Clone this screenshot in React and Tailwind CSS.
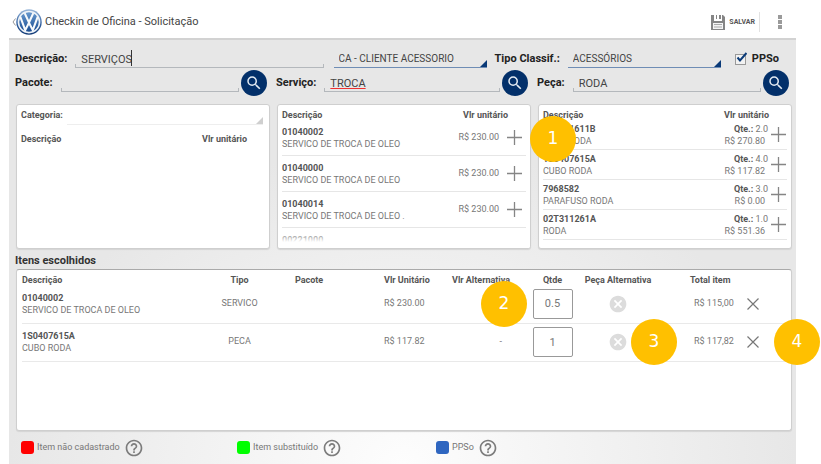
import { MdSearch, MdHelpOutline, MdCancel } from "react-icons/md";

const services = [
  { code: "01040002", name: "SERVICO DE TROCA DE OLEO", price: "R$ 230.00" },
  { code: "01040000", name: "SERVICO DE TROCA DE OLEO", price: "R$ 230.00" },
  { code: "01040014", name: "SERVICO DE TROCA DE OLEO .", price: "R$ 230.00" },
];

const parts = [
  { code: "1S0601611B", name: "AROS RODA", qty: "2.0", price: "R$ 270.80" },
  { code: "1S0407615A", name: "CUBO RODA", qty: "4.0", price: "R$ 117.82" },
  { code: "7968582", name: "PARAFUSO RODA", qty: "3.0", price: "R$ 0.00" },
  { code: "02T311261A", name: "RODA", qty: "1.0", price: "R$ 551.36" },
];

const chosen = [
  { code: "01040002", name: "SERVICO DE TROCA DE OLEO", type: "SERVICO", unit: "R$ 230.00", alt: "", qty: "0.5", total: "R$ 115,00" },
  { code: "1S0407615A", name: "CUBO RODA", type: "PECA", unit: "R$ 117.82", alt: "-", qty: "1", total: "R$ 117,82" },
];

function Logo() {
  return (
    <svg viewBox="0 0 48 48" className="size-[26px]" aria-hidden="true">
      <defs>
        <linearGradient id="rim" x1="0" y1="0" x2="0" y2="1">
          <stop offset="0" stopColor="#9dbadb" />
          <stop offset="0.5" stopColor="#3a68a6" />
          <stop offset="1" stopColor="#123a75" />
        </linearGradient>
        <linearGradient id="disc" x1="0" y1="0" x2="0" y2="1">
          <stop offset="0" stopColor="#6a9bd0" />
          <stop offset="1" stopColor="#164a8f" />
        </linearGradient>
      </defs>
      <circle cx="24" cy="24" r="23.5" fill="url(#rim)" />
      <circle cx="24" cy="24" r="19.5" fill="url(#disc)" stroke="#eef3f8" strokeWidth="3" />
      <g fill="none" stroke="#f7fafc" strokeWidth="3.8" strokeLinejoin="miter">
        <path d="M16 7.5 24 25 32 7.5" />
        <path d="M8 14.5 17 39 24 25.5 31 39 40 14.5" />
      </g>
    </svg>
  );
}

function SaveIcon() {
  return (
    <svg viewBox="0 0 14 15" className="h-[15px] w-[14px]" aria-hidden="true">
      <path d="M0 0h3v6h8V0h1l2 2v13H0z" fill="#858585" />
      <path d="M5 0h1v4H5zM8 0h2v4H8z" fill="#858585" />
      <path d="M2 8h10v6H2z" fill="#f4f4f4" />
      <path d="M3 9.500h8M3 12h8" stroke="#aaa" strokeWidth="1" />
    </svg>
  );
}

function Plus() {
  return (
    <button type="button" aria-label="Adicionar" className="size-[15px] shrink-0">
      <svg viewBox="0 0 15 15" className="size-[15px]" aria-hidden="true">
        <path d="M0 7.500h15M7.500 0v15" stroke="#858585" strokeWidth="1.300" />
      </svg>
    </button>
  );
}

function Field({ id, label, value, inputClass = "", children }) {
  return (
    <div className="flex min-w-0 flex-1 items-center">
      <label htmlFor={id} className="mr-2 shrink-0 font-bold">{label}</label>
      <div className="relative h-[18px] min-w-0 flex-1">
        <input
          id={id}
          defaultValue={value}
          spellCheck={false}
          className={`block h-[18px] w-full bg-transparent px-1.5 text-[#444] outline-none ${inputClass}`}
        />
        <span className="absolute inset-x-0 bottom-0 h-1 border-x border-b border-[#b4b8bc]" />
        {children}
      </div>
    </div>
  );
}

function SearchButton({ label }) {
  return (
    <button
      type="button"
      aria-label={label}
      className="flex size-[26px] shrink-0 items-center justify-center rounded-full bg-[#03306a] text-[#e4ebf3]"
    >
      <MdSearch className="size-[18px]" />
    </button>
  );
}

function Dropdown({ label, value }) {
  return (
    <div className="relative h-[18px] w-[153px] shrink-0 border-b border-[#6f8db5]">
      <select aria-label={label} className="block h-4 w-full appearance-none bg-transparent px-[5px] text-[10px] text-[#444] outline-none">
        <option>{value}</option>
      </select>
      <svg viewBox="0 0 7 7" className="absolute right-0 bottom-0 size-[7px]" aria-hidden="true">
        <path d="M7 0v7H0z" fill="#0a3a78" />
      </svg>
    </div>
  );
}

function Card({ children }) {
  return (
    <section className="relative h-[145px] min-w-0 overflow-hidden rounded-[3px] border border-[#cfcfcf] bg-white px-1 shadow-[0_1px_1px_#d4d4d4]">
      {children}
    </section>
  );
}

function ListHead() {
  return (
    <div className="flex justify-between pt-[5px] pr-[18px] leading-[10px] font-bold text-[#555]">
      <span>Descrição</span>
      <span>Vlr unitário</span>
    </div>
  );
}

function Legend({ color, text, className = "" }) {
  return (
    <div className={`flex items-center ${className}`}>
      <span className={`mr-[3px] size-[13px] rounded-[3px] ${color}`} />
      <span>{text}</span>
      <button type="button" aria-label={`Ajuda: ${text}`} className="ml-1 text-[#7c7c7c]">
        <MdHelpOutline className="size-5" />
      </button>
    </div>
  );
}

function Callout({ children, className }) {
  return (
    <span
      className={`absolute flex size-[46px] items-center justify-center rounded-full bg-[#ffc000] font-['DejaVu_Sans',sans-serif] text-[17px] text-white ${className}`}
    >
      {children}
    </span>
  );
}

export default function App() {
  return (
    <div className="relative min-h-screen overflow-hidden bg-white pr-[25px] pl-[9px] font-['Roboto',sans-serif] text-[9px] text-[#777]">
      <div className="flex min-h-screen flex-col">
        <header className="flex h-[38px] items-center pt-1.5">
          <button type="button" aria-label="Voltar" className="flex items-center pl-[3px]">
            <svg viewBox="0 0 4 8" className="h-2 w-1" aria-hidden="true">
              <path d="M3.500.500 1 4l2.500 3.500" fill="none" stroke="#999" />
            </svg>
            <Logo />
          </button>
          <h1 className="ml-[3px] flex-1 text-[11px] text-[#444]">Checkin de Oficina - Solicitação</h1>
          <button type="button" className="flex h-5 items-center gap-1 border-r border-[#e2e2e2] pr-1 text-[7px] font-bold text-[#555]">
            <SaveIcon />
            SALVAR
          </button>
          <button type="button" aria-label="Mais opções" className="mr-3.5 ml-[18px] flex flex-col gap-px">
            <span className="size-1 bg-[#9a9a9a]" />
            <span className="size-1 bg-[#9a9a9a]" />
            <span className="size-1 bg-[#9a9a9a]" />
          </button>
        </header>

        <main className="flex flex-1 flex-col border-t-2 border-[#d2d2d2] bg-[#e7e7e7] bg-[radial-gradient(ellipse_50%_75%_at_50%_100%,#fdfdfd,#e7e7e7)] pr-1 pl-1.5">
          <form className="pr-[3px] text-[11px] text-[#222]" onSubmit={(e) => e.preventDefault()}>
            <div className="flex h-[30px] items-center pt-2">
              <Field id="descricao" label="Descrição:" value="SERVIÇOS">
                <span className="absolute top-0 left-14 h-4 w-px bg-[#333]" />
              </Field>
              <div className="ml-2.5 flex items-center">
                <Dropdown label="Cliente" value="CA - CLIENTE ACESSORIO" />
                <span className="mx-2 font-bold">Tipo Classif.:</span>
                <Dropdown label="Tipo Classif." value="ACESSÓRIOS" />
                <label className="relative mr-2.5 ml-3.5 flex items-center gap-1.5 font-bold">
                  <input type="checkbox" defaultChecked className="peer size-[11px] appearance-none border border-[#999] bg-[#f2f2f2]" />
                  PPSo
                  <svg viewBox="0 0 12 12" className="absolute top-px left-0 hidden size-3 peer-checked:block" aria-hidden="true">
                    <path d="M2.500 5.500 5 8.500 11.500 1" fill="none" stroke="#0b3b78" strokeWidth="2" />
                  </svg>
                </label>
              </div>
            </div>
            <div className="grid h-[26px] grid-cols-3 gap-[9px]">
              <div className="flex min-w-0 items-center gap-0.5">
                <Field id="pacote" label="Pacote:" value="" />
                <SearchButton label="Buscar pacote" />
              </div>
              <div className="flex min-w-0 items-center gap-0.5">
                <Field id="servico" label="Serviço:" value="TROCA" inputClass="underline decoration-[#f03030] decoration-1 underline-offset-1" />
                <SearchButton label="Buscar serviço" />
              </div>
              <div className="flex min-w-0 items-center gap-0.5">
                <Field id="peca" label="Peça:" value="RODA" />
                <SearchButton label="Buscar peça" />
              </div>
            </div>
          </form>

          <div className="mt-2 grid grid-cols-3 gap-[7px] pl-px">
            <Card>
              <div className="flex items-end gap-1 pt-1 font-bold text-[#555]">
                <label htmlFor="categoria" className="pb-1 leading-3">Categoria:</label>
                <div className="relative mr-0.5 h-4 flex-1 border-b border-[#eee]">
                  <select id="categoria" className="h-full w-full appearance-none bg-transparent outline-none" />
                  <svg viewBox="0 0 7 7" className="absolute right-0 bottom-0 size-[7px]" aria-hidden="true">
                    <path d="M7 0v7H0z" fill="#cfcfcf" />
                  </svg>
                </div>
              </div>
              <div className="pt-1">
                <ListHead />
              </div>
            </Card>
            <Card>
              <ListHead />
              <ul>
                {services.map((s) => (
                  <li key={s.code} className="flex h-[36px] items-center border-b border-[#e6e6e6] pr-1">
                    <div className="flex-1 leading-3">
                      <div className="font-bold text-[#555]">{s.code}</div>
                      <div>{s.name}</div>
                    </div>
                    <span className="mr-2">{s.price}</span>
                    <Plus />
                  </li>
                ))}
                <li className="pt-1.5 leading-3 font-bold text-[#555]">00221000</li>
              </ul>
              <div className="absolute inset-x-0 bottom-0 h-3 bg-linear-to-b from-white/50 to-white to-50%" />
            </Card>
            <Card>
              <ListHead />
              <ul>
                {parts.map((p) => (
                  <li key={p.code} className="flex h-[30px] items-center border-b border-[#e6e6e6] pr-px">
                    <div className="flex-1 leading-3">
                      <div className="font-bold text-[#555]">{p.code}</div>
                      <div>{p.name}</div>
                    </div>
                    <div className="mr-[3px] text-right leading-3">
                      <div><b className="text-[#555]">Qte.:</b> {p.qty}</div>
                      <div className="pr-[3px]">{p.price}</div>
                    </div>
                    <Plus />
                  </li>
                ))}
              </ul>
            </Card>
          </div>

          <h2 className="pt-1 text-[11px] leading-4 font-bold text-[#333]">Itens escolhidos</h2>
          <section className="ml-px h-[162px] rounded-[3px] border border-[#cfcfcf] border-t-[#aaa] bg-white px-[5px] shadow-[0_1px_1px_#d4d4d4]">
            <table className="w-full table-fixed text-center">
              <thead>
                <tr className="h-[15px] align-bottom leading-[10px] text-[#555]">
                  <th className="text-left">Descrição</th>
                  <th className="w-[85px]">Tipo</th>
                  <th className="w-[54px]">Pacote</th>
                  <th className="w-[116px] pl-12 text-left">Vlr Unitário</th>
                  <th className="w-[71px] text-left whitespace-nowrap">Vlr Alternativa</th>
                  <th className="w-[59px]">Qtde</th>
                  <th className="w-[72px] whitespace-nowrap">Peça Alternativa</th>
                  <th className="w-[89px] pl-9 text-left">Total item</th>
                  <td className="w-[43px]" />
                </tr>
              </thead>
              <tbody>
                {chosen.map((c) => (
                  <tr key={c.code} className="h-[38px] border-b border-[#e9e9e9]">
                    <td className="text-left leading-3">
                      <div className="font-bold text-[#555]">{c.code}</div>
                      <div>{c.name}</div>
                    </td>
                    <td>{c.type}</td>
                    <td />
                    <td className="pl-12 text-left">{c.unit}</td>
                    <td className="pr-[21px] text-right">{c.alt}</td>
                    <td>
                      <input
                        aria-label={`Qtde ${c.code}`}
                        defaultValue={c.qty}
                        className="mx-auto block h-[30px] w-10 rounded-[2px] border border-[#999] text-center text-[11px] text-[#777] outline-none"
                      />
                    </td>
                    <td>
                      <button type="button" aria-label="Remover peça alternativa" className="mx-auto block text-[#dcdcdc]">
                        <MdCancel className="size-5" />
                      </button>
                    </td>
                    <td className="pl-10 text-left">{c.total}</td>
                    <td>
                      <button type="button" aria-label="Remover item" className="ml-1 block">
                        <svg viewBox="0 0 12 12" className="size-3" aria-hidden="true">
                          <path d="m.500.500 11 11m0-11-11 11" stroke="#777" strokeWidth="1.200" />
                        </svg>
                      </button>
                    </td>
                  </tr>
                ))}
              </tbody>
            </table>
          </section>

          <footer className="flex flex-1 items-center pl-1.5">
            <Legend color="bg-[#ff0000]" text="Item não cadastrado" className="w-[216px]" />
            <Legend color="bg-[#00ff00]" text="Item substituído" className="w-[199px]" />
            <Legend color="bg-[#2f66c0]" text="PPSo" />
          </footer>
        </main>
      </div>

      <Callout className="top-[116px] left-[530px]">1</Callout>
      <Callout className="top-[281px] left-[481px]">2</Callout>
      <Callout className="top-[319px] left-[631px]">3</Callout>
      <Callout className="top-[319px] left-[774px]">4</Callout>
    </div>
  );
}
